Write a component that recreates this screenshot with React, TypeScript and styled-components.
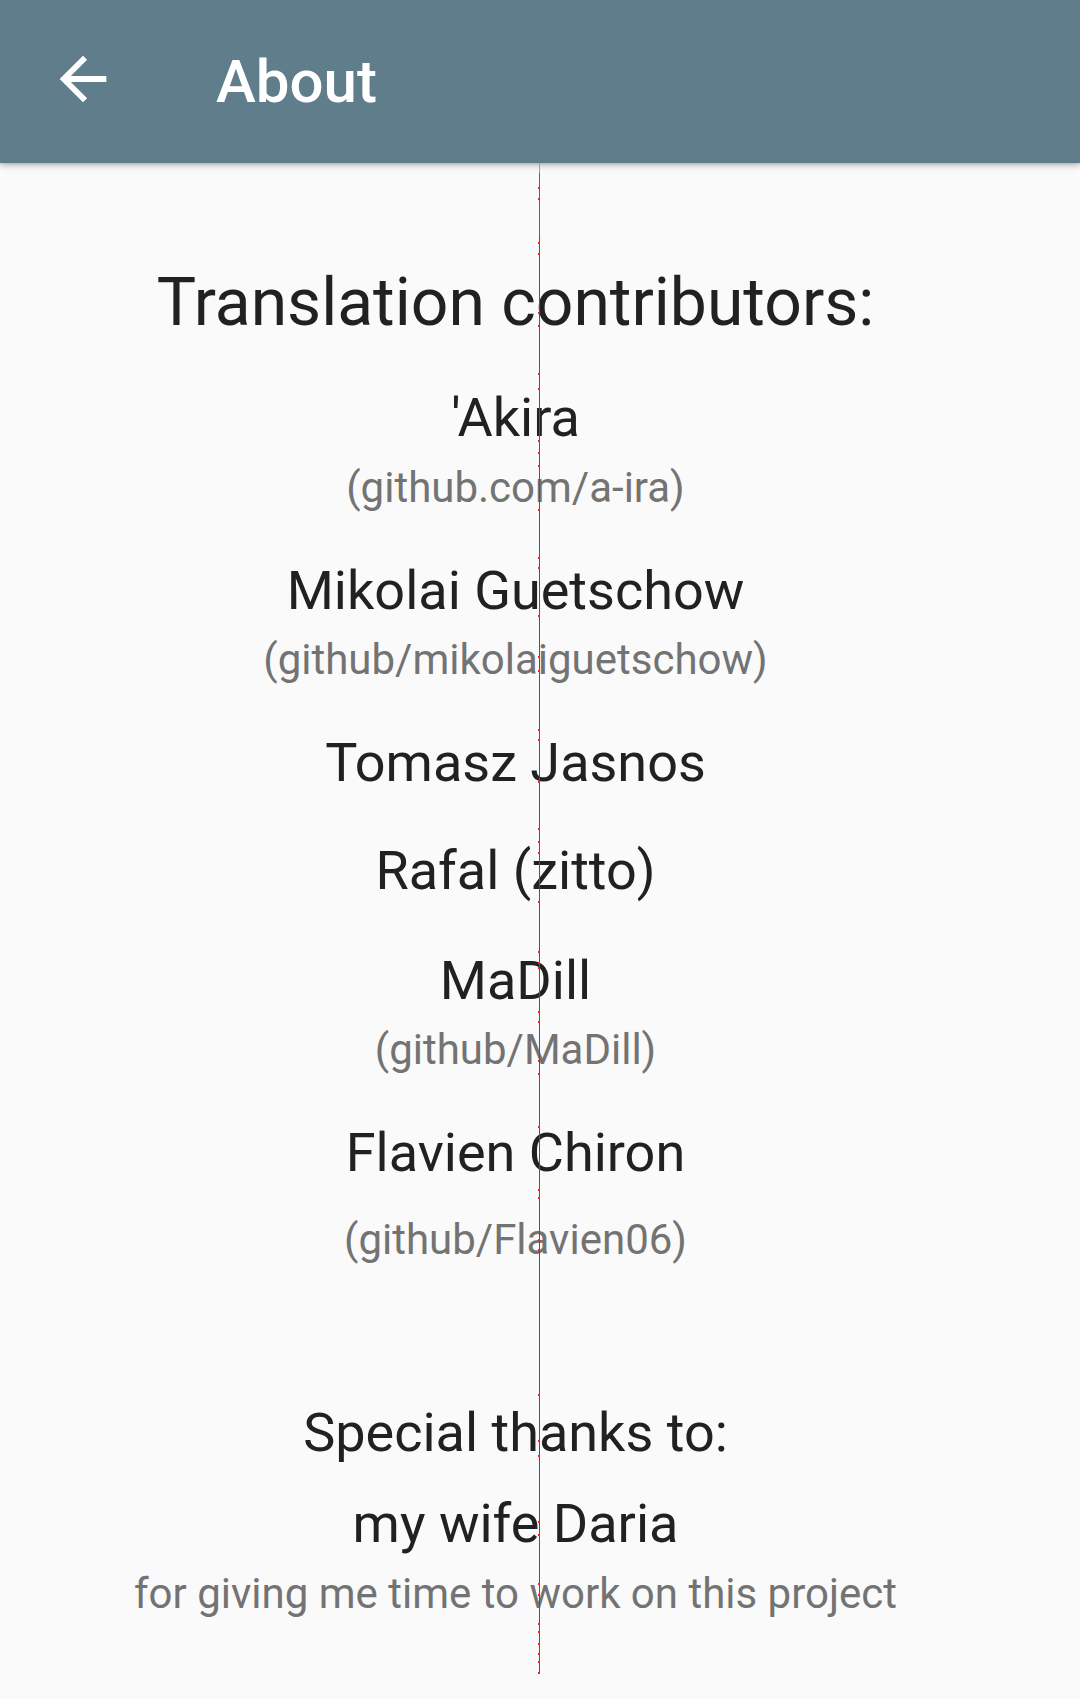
import React from "react";
import styled, { createGlobalStyle } from "styled-components";

const GlobalStyle = createGlobalStyle`
  html, body {
    margin: 0;
    padding: 0;
    background: #fafafa;
  }
  body {
    font-family: Roboto, "Noto Sans", "Liberation Sans", sans-serif;
    -webkit-font-smoothing: antialiased;
  }
`;

const Page = styled.div`
  position: relative;
  width: 1080px;
  min-height: 1699px;
  background: #fafafa;
  overflow: hidden;
`;

const AppBar = styled.header`
  position: relative;
  z-index: 2;
  height: 163px;
  display: flex;
  align-items: center;
  background: #607d8b;
  box-shadow: 0 3px 6px rgba(0, 0, 0, 0.22), 0 1px 2px rgba(0, 0, 0, 0.12);
`;

const BackButton = styled.button`
  width: 70px;
  height: 70px;
  margin-left: 48px;
  margin-bottom: 6px;
  padding: 0;
  border: 0;
  background: transparent;
  display: flex;
  align-items: center;
  justify-content: center;
  cursor: pointer;
`;

const BarTitle = styled.h1`
  margin: 0 0 0 98px;
  font-size: 60px;
  line-height: 60px;
  font-weight: 500;
  color: #ffffff;
`;

const Content = styled.main`
  padding: 101px 69px 40px 20px;
  text-align: center;
`;

const SectionTitle = styled.h2<{ $gap?: number }>`
  margin: ${(p) => p.$gap ?? 0}px 0 0;
  font-size: 66px;
  line-height: 78px;
  font-weight: 400;
  color: #212121;
`;

const Name = styled.div<{ $gap?: number }>`
  margin-top: ${(p) => p.$gap ?? 44}px;
  font-size: 54px;
  line-height: 64px;
  color: #212121;
`;

const Handle = styled.div<{ $gap?: number }>`
  margin-top: ${(p) => p.$gap ?? 12}px;
  font-size: 42px;
  line-height: 50px;
  color: #737373;
`;

const Guide = styled.div`
  position: absolute;
  z-index: 3;
  left: 539px;
  top: 163px;
  width: 1px;
  height: 1510px;
  background: #0a5cff;
  pointer-events: none;
`;

const GuideTip = styled.div`
  position: absolute;
  left: 0;
  top: 0;
  width: 1px;
  height: 10px;
  background: #e27aa6;
`;

const GuideTint = styled.div`
  position: absolute;
  left: 0;
  top: 10px;
  width: 1px;
  height: 62px;
  background: #5a4fe6;
`;

const GuideDot = styled.span`
  position: absolute;
  left: -1px;
  width: 2px;
  height: 2px;
  background: #ff1a1a;
`;

const dots = [
  187, 198, 242, 253, 312, 325, 373, 388, 440, 452, 465, 509, 557, 567, 615,
  656, 670, 729, 739, 781, 828, 841, 852, 901, 951, 962, 967, 1011, 1021, 1060,
  1073, 1126, 1189, 1197, 1239, 1249, 1394, 1440, 1455, 1521, 1534, 1583, 1594,
  1623, 1631, 1643, 1653, 1661, 1672,
];

const ArrowBack = () => (
  <svg width="70" height="70" viewBox="0 0 24 24" aria-hidden="true">
    <path
      fill="#ffffff"
      d="M20 11H7.83l5.59-5.59L12 4l-8 8 8 8 1.41-1.41L7.83 13H20v-2z"
    />
  </svg>
);

export default function App() {
  return (
    <Page>
      <GlobalStyle />
      <AppBar>
        <BackButton aria-label="Back">
          <ArrowBack />
        </BackButton>
        <BarTitle>About</BarTitle>
      </AppBar>
      <Content>
        <SectionTitle>Translation contributors:</SectionTitle>
        <Name $gap={44}>'Akira</Name>
        <Handle $gap={13}>(github.com/a-ira)</Handle>
        <Name $gap={46}>Mikolai Guetschow</Name>
        <Handle $gap={12}>(github/mikolaiguetschow)</Handle>
        <Name $gap={46}>Tomasz Jasnos</Name>
        <Name $gap={44}>Rafal (zitto)</Name>
        <Name $gap={46}>MaDill</Name>
        <Handle $gap={12}>(github/MaDill)</Handle>
        <Name $gap={46}>Flavien Chiron</Name>
        <Handle $gap={30}>(github/Flavien06)</Handle>
        <Name $gap={136}>Special thanks to:</Name>
        <Name $gap={27}>my wife Daria</Name>
        <Handle $gap={13}>for giving me time to work on this project</Handle>
      </Content>
      <Guide>
        <GuideTip />
        <GuideTint />
        {dots.map((y) => (
          <GuideDot key={y} style={{ top: y - 163 }} />
        ))}
      </Guide>
    </Page>
  );
}
